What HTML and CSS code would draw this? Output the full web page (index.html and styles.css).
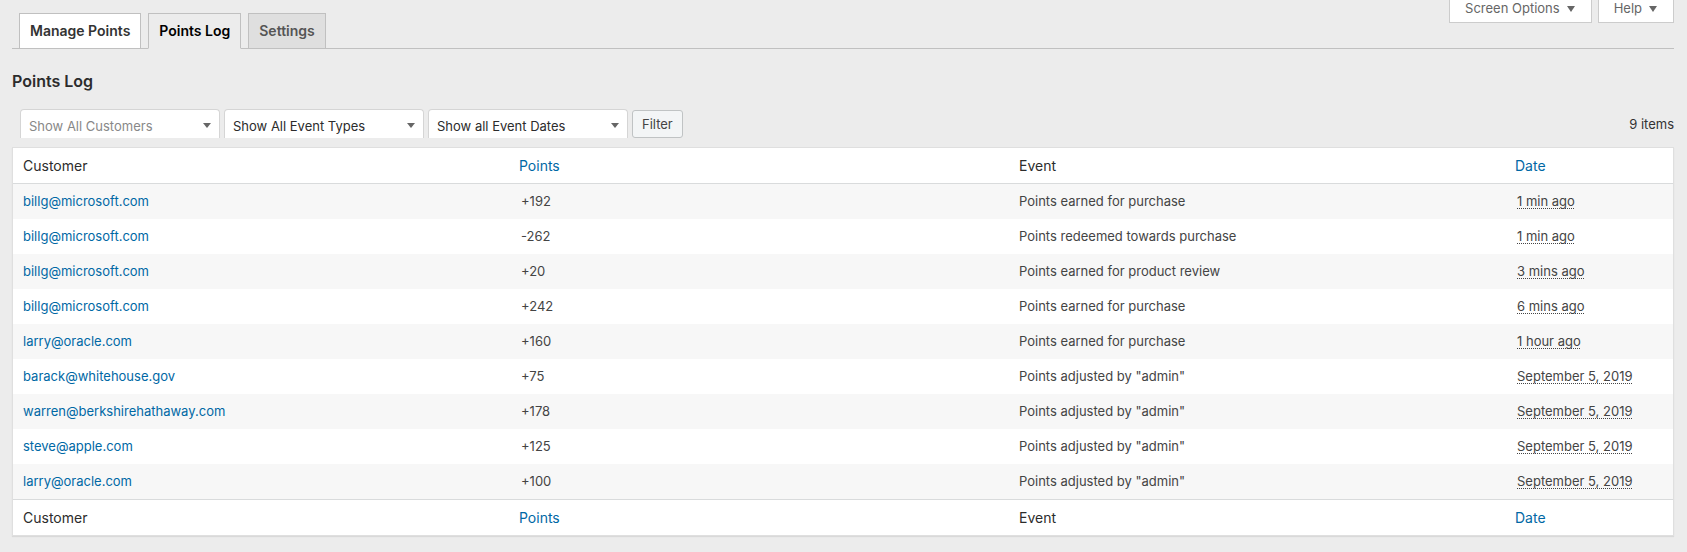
FILE: index.html
```html
<!DOCTYPE html>
<html lang="en">
<head>
  <meta charset="UTF-8">
  <meta name="viewport" content="width=device-width, initial-scale=1.0">
  <title>Points Log</title>
  <link rel="stylesheet" href="styles.css">
</head>
<body>

  <header class="page-header">
    <nav class="nav-tabs">
      <a href="#manage" class="nav-tab nav-tab-hover">Manage Points</a>
      <a href="#log" class="nav-tab nav-tab-active">Points Log</a>
      <a href="#settings" class="nav-tab">Settings</a>
    </nav>
    <div class="screen-meta">
      <button type="button" class="meta-btn">Screen Options</button>
      <button type="button" class="meta-btn">Help</button>
    </div>
  </header>

  <main>
    <h2>Points Log</h2>

    <form class="tablenav">
      <div class="select-box">
        <select class="placeholder" aria-label="Customer">
          <option>Show All Customers</option>
        </select>
      </div>
      <div class="select-box">
        <select aria-label="Event type">
          <option>Show All Event Types</option>
        </select>
      </div>
      <div class="select-box">
        <select aria-label="Event date">
          <option>Show all Event Dates</option>
        </select>
      </div>
      <button type="button" class="filter-btn">Filter</button>
      <span class="item-count">9 items</span>
    </form>

    <table class="points-table">
      <thead>
        <tr>
          <th class="col-customer">Customer</th>
          <th class="col-points"><a href="#points">Points</a></th>
          <th class="col-event">Event</th>
          <th class="col-date"><a href="#date">Date</a></th>
        </tr>
      </thead>
      <tbody>
        <tr>
          <td><a href="#user">billg@microsoft.com</a></td>
          <td>+192</td>
          <td>Points earned for purchase</td>
          <td><abbr>1 min ago</abbr></td>
        </tr>
        <tr>
          <td><a href="#user">billg@microsoft.com</a></td>
          <td>-262</td>
          <td>Points redeemed towards purchase</td>
          <td><abbr>1 min ago</abbr></td>
        </tr>
        <tr>
          <td><a href="#user">billg@microsoft.com</a></td>
          <td>+20</td>
          <td>Points earned for product review</td>
          <td><abbr>3 mins ago</abbr></td>
        </tr>
        <tr>
          <td><a href="#user">billg@microsoft.com</a></td>
          <td>+242</td>
          <td>Points earned for purchase</td>
          <td><abbr>6 mins ago</abbr></td>
        </tr>
        <tr>
          <td><a href="#user">larry@oracle.com</a></td>
          <td>+160</td>
          <td>Points earned for purchase</td>
          <td><abbr>1 hour ago</abbr></td>
        </tr>
        <tr>
          <td><a href="#user">barack@whitehouse.gov</a></td>
          <td>+75</td>
          <td>Points adjusted by "admin"</td>
          <td><abbr>September 5, 2019</abbr></td>
        </tr>
        <tr>
          <td><a href="#user">warren@berkshirehathaway.com</a></td>
          <td>+178</td>
          <td>Points adjusted by "admin"</td>
          <td><abbr>September 5, 2019</abbr></td>
        </tr>
        <tr>
          <td><a href="#user">steve@apple.com</a></td>
          <td>+125</td>
          <td>Points adjusted by "admin"</td>
          <td><abbr>September 5, 2019</abbr></td>
        </tr>
        <tr>
          <td><a href="#user">larry@oracle.com</a></td>
          <td>+100</td>
          <td>Points adjusted by "admin"</td>
          <td><abbr>September 5, 2019</abbr></td>
        </tr>
      </tbody>
      <tfoot>
        <tr>
          <th>Customer</th>
          <th class="col-points"><a href="#points">Points</a></th>
          <th>Event</th>
          <th class="col-date"><a href="#date">Date</a></th>
        </tr>
      </tfoot>
    </table>
  </main>

</body>
</html>
```
FILE: styles.css
```css
* {
  box-sizing: border-box;
}

body {
  margin: 0;
  padding: 0 13px 12px 12px;
  background: #ececec;
  color: #444;
  font-family: Inter, "Open Sans", sans-serif;
  font-size: 13px;
  line-height: 19px;
}

a {
  color: #0068a5;
  text-decoration: none;
}

a:hover {
  color: #00a0d2;
}

button,
select {
  font: inherit;
}

/* Tabs and screen options */
.page-header {
  display: flex;
  justify-content: space-between;
  align-items: flex-start;
  border-bottom: 1px solid #c0c0c0;
}

.nav-tabs {
  display: flex;
  gap: 7px;
  padding: 13px 0 0 7px;
  margin-bottom: -1px;
}

.nav-tab {
  height: 36px;
  padding: 5px 10px;
  border: 1px solid #c0c0c0;
  background: #dfdfdf;
  color: #555;
  font-size: 14px;
  font-weight: 600;
  line-height: 24px;
}

.nav-tab-hover,
.nav-tab:hover {
  background: #fff;
  color: #333;
}

.nav-tab-active,
.nav-tab-active:hover {
  background: #ececec;
  border-bottom-color: #ececec;
  color: #000;
}

.screen-meta {
  display: flex;
  gap: 6px;
}

.meta-btn {
  display: flex;
  align-items: center;
  gap: 7px;
  height: 23px;
  padding: 0 16px 5px 15px;
  border: 1px solid #ccc;
  border-top: none;
  background: #fff;
  color: #666;
  cursor: pointer;
}

.meta-btn::after,
.select-box::after {
  content: "";
  border: 4px solid transparent;
  border-top: 6px solid #666;
  border-bottom: none;
}

h2 {
  margin: 22px 0 18px;
  color: #2c2c2c;
  font-size: 16px;
  font-weight: 600;
  line-height: 20px;
}

/* Filters */
.tablenav {
  display: flex;
  align-items: flex-end;
  gap: 4px;
  height: 29px;
  margin-bottom: 9px;
  padding-left: 8px;
}

.select-box {
  position: relative;
  width: 200px;
}

.select-box::after {
  position: absolute;
  top: 14px;
  right: 9px;
  border-top-width: 5px;
  pointer-events: none;
}

.select-box select {
  display: block;
  width: 100%;
  height: 29px;
  padding: 5px 24px 0 8px;
  border: 1px solid #d5d5d5;
  border-bottom: none;
  border-radius: 4px 4px 0 0;
  background: #fff;
  color: #2c2c2c;
  appearance: none;
}

.select-box .placeholder {
  color: #888;
}

.filter-btn {
  height: 28px;
  padding: 0 9px;
  border: 1px solid #c0c3c4;
  border-radius: 3px;
  background: #f3f5f6;
  color: #444;
  cursor: pointer;
}

.item-count {
  margin-left: auto;
  padding-bottom: 4px;
  color: #333;
}

/* Log table */
.points-table {
  width: 100%;
  table-layout: fixed;
  border: 1px solid #dfdfdf;
  border-spacing: 0;
  background: #fff;
  box-shadow: 0 1px 1px rgba(0, 0, 0, 0.08);
}

.points-table th {
  height: 36px;
  padding: 0 10px;
  color: #2c2c2c;
  font-size: 14px;
  font-weight: 400;
  text-align: left;
}

.points-table thead th {
  border-bottom: 1px solid #d9dbdc;
}

.points-table tfoot th {
  border-top: 1px solid #d9dbdc;
}

.points-table .col-points,
.points-table .col-date {
  padding: 0 8px;
}

.points-table td {
  height: 35px;
  padding: 0 10px;
}

.points-table tbody tr:nth-child(odd) {
  background: #f7f7f7;
}

.col-customer,
.col-points,
.col-event {
  width: 30%;
}

.col-date {
  width: 10%;
}

abbr {
  text-decoration: underline dotted 1px;
  text-decoration-skip-ink: none;
  text-underline-offset: 2px;
}
```
